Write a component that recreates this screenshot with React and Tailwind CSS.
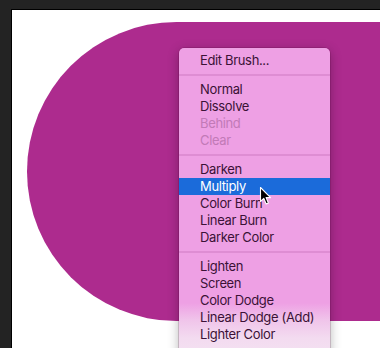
import React from "react";

const groups = [
  [{ label: "Edit Brush..." }],
  [
    { label: "Normal" },
    { label: "Dissolve" },
    { label: "Behind", disabled: true },
    { label: "Clear", disabled: true },
  ],
  [
    { label: "Darken" },
    { label: "Multiply", active: true },
    { label: "Color Burn" },
    { label: "Linear Burn" },
    { label: "Darker Color" },
  ],
  [
    { label: "Lighten" },
    { label: "Screen" },
    { label: "Color Dodge" },
    { label: "Linear Dodge (Add)" },
    { label: "Lighter Color" },
  ],
];

const MenuItem = ({ item }) => {
  let cls = "text-[#3b1236]";
  if (item.disabled) cls = "text-[#c27ab7]";
  if (item.active) cls = "bg-[#1b6bda] text-white";
  return (
    <div className={`h-[17px] pl-[21px] leading-[17px] whitespace-nowrap ${cls}`}>
      {item.label}
    </div>
  );
};

const Cursor = () => (
  <svg width="14" height="20" viewBox="0 0 14 20" className="absolute left-[259px] top-[186px]">
    <path
      d="M1.5 1.5 L1.5 15.5 L4.8 12.4 L7.2 18 L9.4 17 L7.1 11.6 L11.6 11.6 Z"
      fill="#000"
      stroke="#fff"
      strokeWidth="1.1"
      strokeLinejoin="round"
    />
  </svg>
);

export default function App() {
  return (
    <div className="relative w-[380px] h-[348px] overflow-hidden bg-[#232323] pl-[11px] pt-[9px]">
      {/* Canvas */}
      <div className="h-full border-l border-t border-black bg-white pl-[15px] pt-[12px]">
        <div className="w-[520px] h-[299px] rounded-full bg-[#ad2b8e] blur-[0.4px]" />
      </div>

      {/* Context menu */}
      <div
        className="absolute left-[179px] top-[48px] w-[151px] h-[320px] pt-[4px] rounded-[5px] shadow-[0_0_0_0.5px_rgba(80,0,60,0.35),0_3px_12px_rgba(0,0,0,0.3)] bg-[linear-gradient(to_bottom,#eea0e4_0px,#eea0e4_255px,#f0c4ea_272px,#f3dbf0_290px,#f4e6f2_320px)] text-[13px] tracking-[-0.35px]"
        style={{ fontFamily: "Inter, 'Noto Sans', 'Liberation Sans', sans-serif" }}
      >
        {groups.map((group, gi) => (
          <div key={gi}>
            {gi > 0 && (
              <div className="h-[12px] flex items-center">
                <div className="w-full h-[2px] bg-[#de8dd3]" />
              </div>
            )}
            {group.map((item) => (
              <MenuItem key={item.label} item={item} />
            ))}
          </div>
        ))}
      </div>

      <Cursor />
    </div>
  );
}
